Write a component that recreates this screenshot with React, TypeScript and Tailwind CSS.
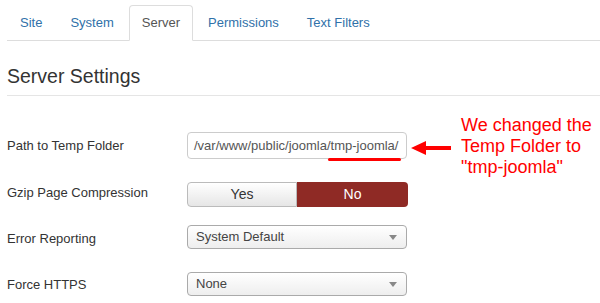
import React from 'react';

const tabs = ['Site', 'System', 'Server', 'Permissions', 'Text Filters'];

function Caret() {
  return (
    <svg width="8" height="5" viewBox="0 0 8 5" className="shrink-0">
      <path d="M0 0 L8 0 L4 5 Z" fill="#888" />
    </svg>
  );
}

function Select({ value }: { value: string }) {
  return (
    <div className="flex h-[24px] w-[220px] items-center justify-between rounded-[4px] border border-[#aaa] bg-gradient-to-b from-white to-[#eee] pl-[8px] pr-[9px] text-[13px] text-[#444]">
      <span>{value}</span>
      <Caret />
    </div>
  );
}

export default function App() {
  const active = 'Server';

  return (
    <div className="relative h-[303px] w-[600px] overflow-hidden bg-white font-['Liberation_Sans',Arial,sans-serif] text-[13px] text-[#333]">
      {/* tabs */}
      <div className="pl-[7px] pt-[5px]">
        <ul className="flex border-b border-[#ddd]">
          {tabs.map((t) => (
            <li key={t} className="-mb-px mr-[2px]">
              <span
                className={`block rounded-t-[4px] border px-[12px] py-[8px] leading-[18px] ${
                  t === active
                    ? 'border-[#ddd] border-b-white bg-white text-[#555]'
                    : 'border-transparent text-[#3071a9]'
                }`}
              >
                {t}
              </span>
            </li>
          ))}
        </ul>
      </div>

      {/* heading */}
      <div className="ml-[7px] mt-[24px] border-b border-[#e5e5e5] pb-[8px]">
        <h3 className="text-[19.5px] leading-[22px] text-[#333]">Server Settings</h3>
      </div>

      {/* form */}
      <div className="pl-[7px]">
        <div className="mt-[36px] flex items-center">
          <label className="w-[180px]">Path to Temp Folder</label>
          <div className="relative">
            <div className="flex h-[27px] w-[220px] items-center rounded-[4px] border border-[#ccc] bg-white px-[6px] text-[13px] text-[#555]">
              /var/www/public/joomla/tmp-joomla/
            </div>
            <div className="absolute left-[141px] top-[26px] h-[3px] w-[73px] rounded-full bg-[#f00]" />
          </div>
        </div>

        <div className="mt-[23px] flex items-center">
          <label className="w-[180px] -mt-[4px]">Gzip Page Compression</label>
          <div className="flex h-[25px] w-[221px]">
            <div className="flex w-[110px] items-center justify-center rounded-l-[4px] border border-[#bbb] bg-gradient-to-b from-white to-[#e6e6e6] text-[14px] text-[#333]">
              Yes
            </div>
            <div className="flex flex-1 items-center justify-center rounded-r-[4px] bg-[#8f2a25] text-[14px] text-white">
              No
            </div>
          </div>
        </div>

        <div className="mt-[18px] flex items-center">
          <label className="w-[180px] mt-[3px]">Error Reporting</label>
          <Select value="System Default" />
        </div>

        <div className="mt-[23px] flex items-center">
          <label className="w-[180px] mt-[2px]">Force HTTPS</label>
          <Select value="None" />
        </div>
      </div>

      {/* annotation */}
      <div className="absolute left-[411px] top-[141px]">
        <svg width="42" height="14" viewBox="0 0 42 14">
          <path d="M0 7 L15 0 L15 5 L40 5 L40 9 L15 9 L15 14 Z" fill="#f00" />
        </svg>
      </div>
      <div className="absolute left-[461px] top-[115px] text-[18px] leading-[21px] text-[#f00]">
        We changed the
        <br />
        Temp Folder to
        <br />
        "tmp-joomla"
      </div>
    </div>
  );
}
